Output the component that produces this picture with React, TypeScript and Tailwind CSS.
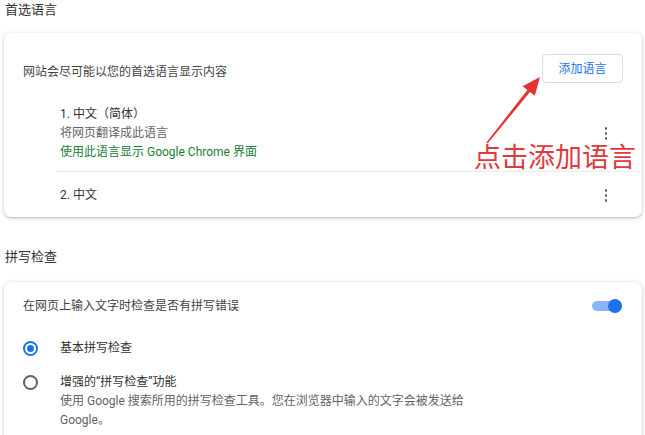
import React from "react";

const font = { fontFamily: "Roboto, 'Noto Sans CJK SC', sans-serif" };

function Kebab() {
  return (
    <div className="flex h-[19px] w-[24px] flex-col items-center justify-center gap-[2.5px]">
      <span className="block h-[2.5px] w-[2.5px] rounded-full bg-[#5f6368]" />
      <span className="block h-[2.5px] w-[2.5px] rounded-full bg-[#5f6368]" />
      <span className="block h-[2.5px] w-[2.5px] rounded-full bg-[#5f6368]" />
    </div>
  );
}

function Radio({ checked }: { checked: boolean }) {
  return (
    <div
      className={
        "flex h-[15px] w-[15px] items-center justify-center rounded-full border-2 " +
        (checked ? "border-[#1a73e8]" : "border-[#5f6368]")
      }
    >
      {checked && <div className="h-[7px] w-[7px] rounded-full bg-[#1a73e8]" />}
    </div>
  );
}

export default function App() {
  return (
    <div
      className="relative h-[435px] w-[645px] overflow-hidden bg-white pl-[4px] pr-[3px] text-[12px] text-[#333]"
      style={font}
    >
      <div className="h-[20px] pl-[1px] text-[13px] leading-[20px] text-[#333]">首选语言</div>

      <div className="mt-[13px] rounded-[7px] bg-white shadow-[0_1px_2px_rgba(60,64,67,0.25),0_1px_4px_1px_rgba(60,64,67,0.12)]">
        <div className="flex items-start justify-between pl-[19px] pr-[19px] pt-[21px]">
          <div className="mt-[8px] leading-[20px] text-[#444]">网站会尽可能以您的首选语言显示内容</div>
          <div className="flex h-[29px] w-[81px] items-center justify-center rounded-[4px] border border-[#dadce0] text-[12px] text-[#1a73e8]">
            添加语言
          </div>
        </div>
        <div className="ml-[53px] mr-[4px] mt-[22px]">
          <div className="flex items-center justify-between border-b border-[#e8eaed] pb-[9px] pl-[3px] pr-[20px]">
            <div className="leading-[19px]">
              <div className="text-[#333]">1. 中文（简体）</div>
              <div className="text-[#5f6368]">将网页翻译成此语言</div>
              <div className="text-[#188038]">使用此语言显示 Google Chrome 界面</div>
            </div>
            <Kebab />
          </div>
          <div className="flex items-center justify-between pb-[12px] pl-[3px] pr-[20px] pt-[14px]">
            <div className="leading-[19px] text-[#333]">2. 中文</div>
            <Kebab />
          </div>
        </div>
      </div>

      <div className="mt-[30px] h-[20px] pl-[1px] text-[13px] leading-[20px] text-[#333]">拼写检查</div>

      <div className="mt-[15px] h-[200px] rounded-[7px] bg-white shadow-[0_1px_2px_rgba(60,64,67,0.25),0_1px_4px_1px_rgba(60,64,67,0.12)]">
        <div className="flex items-center justify-between pl-[19px] pr-[20px] pt-[14px]">
          <div className="leading-[20px] text-[#444]">在网页上输入文字时检查是否有拼写错误</div>
          <div className="relative h-[14px] w-[30px]">
            <div className="absolute left-0 top-[2px] h-[10px] w-[28px] rounded-full bg-[#8ab4f8]" />
            <div className="absolute right-0 top-0 h-[14px] w-[14px] rounded-full bg-[#1a73e8]" />
          </div>
        </div>
        <div className="mt-[22px] flex items-center pl-[19px]">
          <Radio checked />
          <div className="ml-[22px] leading-[20px] text-[#333]">基本拼写检查</div>
        </div>
        <div className="mt-[15px] flex items-start pl-[19px]">
          <div className="mt-[2px]">
            <Radio checked={false} />
          </div>
          <div className="ml-[22px] leading-[19px]">
            <div className="text-[#333]">增强的“拼写检查”功能</div>
            <div className="text-[#5f6368]">
              使用 Google 搜索所用的拼写检查工具。您在浏览器中输入的文字会被发送给
              <br />
              Google。
            </div>
          </div>
        </div>
      </div>

      <svg
        className="pointer-events-none absolute left-0 top-0"
        width="645"
        height="435"
        viewBox="0 0 645 435"
      >
        <polygon
          points="486.4,142.6 527.4,89.9 522.6,86.2 540,77 534.8,95.8 530.0,92.1 487.6,143.4"
          fill="#e8322f"
        />
      </svg>
      <div
        className="absolute left-[474px] top-[145px] whitespace-nowrap text-[27px] leading-[27px] text-[#e0383c]"
        style={font}
      >
        点击添加语言
      </div>
    </div>
  );
}
